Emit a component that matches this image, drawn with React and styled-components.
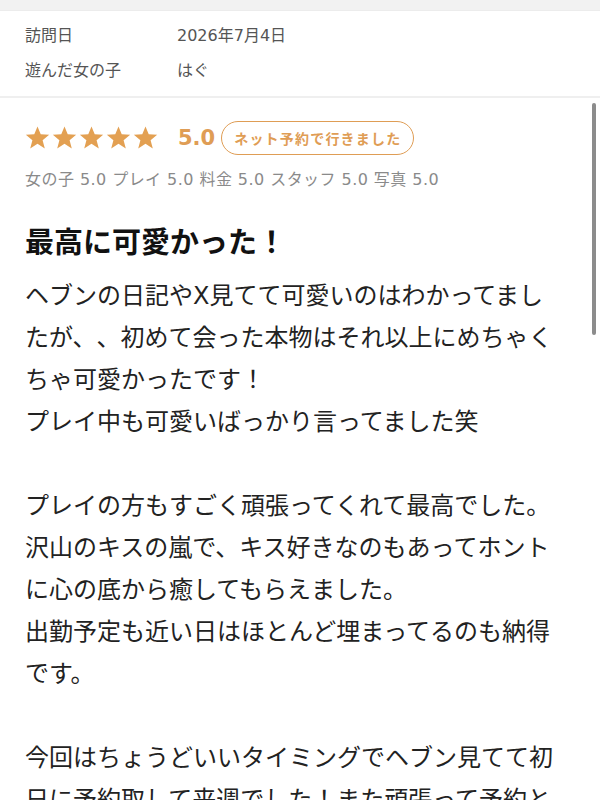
import React from "react";
import styled, { createGlobalStyle } from "styled-components";

const GlobalStyle = createGlobalStyle`
  html, body {
    margin: 0;
    padding: 0;
    background: #fff;
  }
  body {
    font-family: "DejaVu Sans", "Noto Sans CJK JP", sans-serif;
    text-spacing-trim: space-all;
    -webkit-font-smoothing: antialiased;
  }
`;

const ORANGE = "#df9d55";

const Page = styled.div`
  width: 600px;
  height: 800px;
  overflow: hidden;
  position: relative;
  background: #fff;
`;

const TopBand = styled.div`
  height: 10px;
  background: #f2f2f2;
  border-bottom: 1px solid #ececec;
`;

const InfoSection = styled.div`
  padding: 5px 25px 10px;
  border-bottom: 2px solid #efefef;
`;

const InfoRow = styled.div`
  display: grid;
  grid-template-columns: 152px 1fr;
  height: 35px;
  align-items: center;
  font-size: 16px;
  color: #555;
`;

const Review = styled.div`
  padding: 23px 25px 0;
`;

const RatingRow = styled.div`
  display: flex;
  align-items: center;
  height: 34px;
`;

const Stars = styled.div`
  display: flex;
  gap: 2px;
  margin-right: 20px;
`;

const Score = styled.span`
  font-size: 21px;
  font-weight: 600;
  color: ${ORANGE};
  margin-right: 6px;
`;

const Badge = styled.span`
  display: inline-flex;
  align-items: center;
  height: 34px;
  box-sizing: border-box;
  padding: 0 12px;
  border: 1.5px solid ${ORANGE};
  border-radius: 17px;
  color: ${ORANGE};
  font-size: 14px;
  font-weight: 600;
  letter-spacing: 1.2px;
`;

const SubRatings = styled.div`
  margin-top: 14px;
  font-size: 16px;
  line-height: 22px;
  letter-spacing: 0.45px;
  color: #8a8a8a;
`;

const Title = styled.h2`
  margin: 34px 0 0;
  font-size: 29px;
  line-height: 36px;
  font-weight: 700;
  color: #111;
`;

const Body = styled.div`
  margin-top: 14px;
  width: 540px;
  font-size: 24px;
  line-height: 42px;
  color: #222;
`;

const Paragraph = styled.p`
  margin: 0 0 42px;
`;

const ScrollThumb = styled.div`
  position: absolute;
  right: 4px;
  top: 103px;
  width: 4px;
  height: 232px;
  border-radius: 2px;
  background: #8c8c8c;
`;

const Star = () => (
  <svg width="25" height="24" viewBox="0 0 24 23">
    <polygon
      points="12,0.5 15.1,8 23.2,8.4 16.9,13.6 19,21.6 12,17.1 5,21.6 7.1,13.6 0.8,8.4 8.9,8"
      fill="#e3a052"
    />
  </svg>
);

const subRatings = [
  ["女の子", "5.0"],
  ["プレイ", "5.0"],
  ["料金", "5.0"],
  ["スタッフ", "5.0"],
  ["写真", "5.0"],
];

const paragraphs = [
  [
    "ヘブンの日記やX見てて可愛いのはわかってましたが、、初めて会った本物はそれ以上にめちゃくちゃ可愛かったです！",
    "プレイ中も可愛いばっかり言ってました笑",
  ],
  [
    "プレイの方もすごく頑張ってくれて最高でした。",
    "沢山のキスの嵐で、キス好きなのもあってホントに心の底から癒してもらえました。",
    "出勤予定も近い日はほとんど埋まってるのも納得です。",
  ],
  ["今回はちょうどいいタイミングでヘブン見てて初日に予約取して来週でした！また頑張って予約とります"],
];

export default function App() {
  return (
    <Page>
      <GlobalStyle />
      <TopBand />
      <InfoSection>
        <InfoRow>
          <span>訪問日</span>
          <span>2026年7月4日</span>
        </InfoRow>
        <InfoRow>
          <span>遊んだ女の子</span>
          <span>はぐ</span>
        </InfoRow>
      </InfoSection>
      <Review>
        <RatingRow>
          <Stars>
            {[0, 1, 2, 3, 4].map((i) => (
              <Star key={i} />
            ))}
          </Stars>
          <Score>5.0</Score>
          <Badge>ネット予約で行きました</Badge>
        </RatingRow>
        <SubRatings>
          {subRatings.map(([k, v]) => `${k} ${v}`).join(" ")}
        </SubRatings>
        <Title>最高に可愛かった！</Title>
        <Body>
          {paragraphs.map((lines, i) => (
            <Paragraph key={i}>
              {lines.map((line, j) => (
                <React.Fragment key={j}>
                  {j > 0 && <br />}
                  {line}
                </React.Fragment>
              ))}
            </Paragraph>
          ))}
        </Body>
      </Review>
      <ScrollThumb />
    </Page>
  );
}
